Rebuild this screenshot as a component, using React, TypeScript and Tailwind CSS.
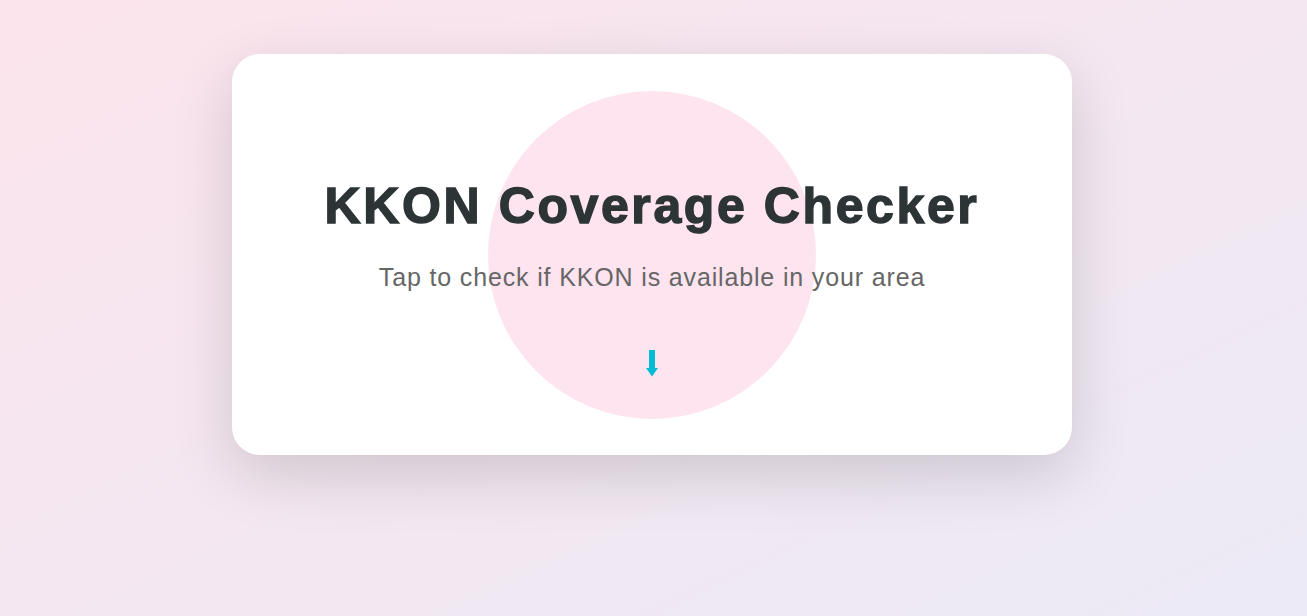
export default function App() {
  return (
    <div className="min-h-screen w-full bg-gradient-to-br from-[#fce4ec] to-[#ebeaf6] flex justify-center pt-[54px]" style={{ fontFamily: '"Liberation Sans", Arial, sans-serif' }}>
      <div className="relative mr-[3px] w-[840px] h-[401px] bg-white rounded-[28px] shadow-[0_20px_60px_rgba(0,0,0,0.15)] overflow-hidden flex flex-col items-center">
        <div className="absolute left-[256px] top-[37px] w-[328px] h-[328px] rounded-full bg-[#fee4ee]" />
        <h1 className="relative mt-[127px] text-[50px] leading-none font-black text-[#2d3436] tracking-[2.6px] [-webkit-text-stroke:1.4px_#2d3436] whitespace-nowrap">
          KKON Coverage Checker
        </h1>
        <p className="relative mt-[34px] text-[25px] leading-none text-[#666] tracking-[0.85px] whitespace-nowrap">
          Tap to check if KKON is available in your area
        </p>
        <svg className="relative mt-[60px]" width="12" height="27" viewBox="0 0 12 27">
          <rect x="3" y="0" width="6" height="19" fill="#00bcd4" />
          <polygon points="0,18 12,18 6,26.5" fill="#00bcd4" />
        </svg>
      </div>
    </div>
  );
}
